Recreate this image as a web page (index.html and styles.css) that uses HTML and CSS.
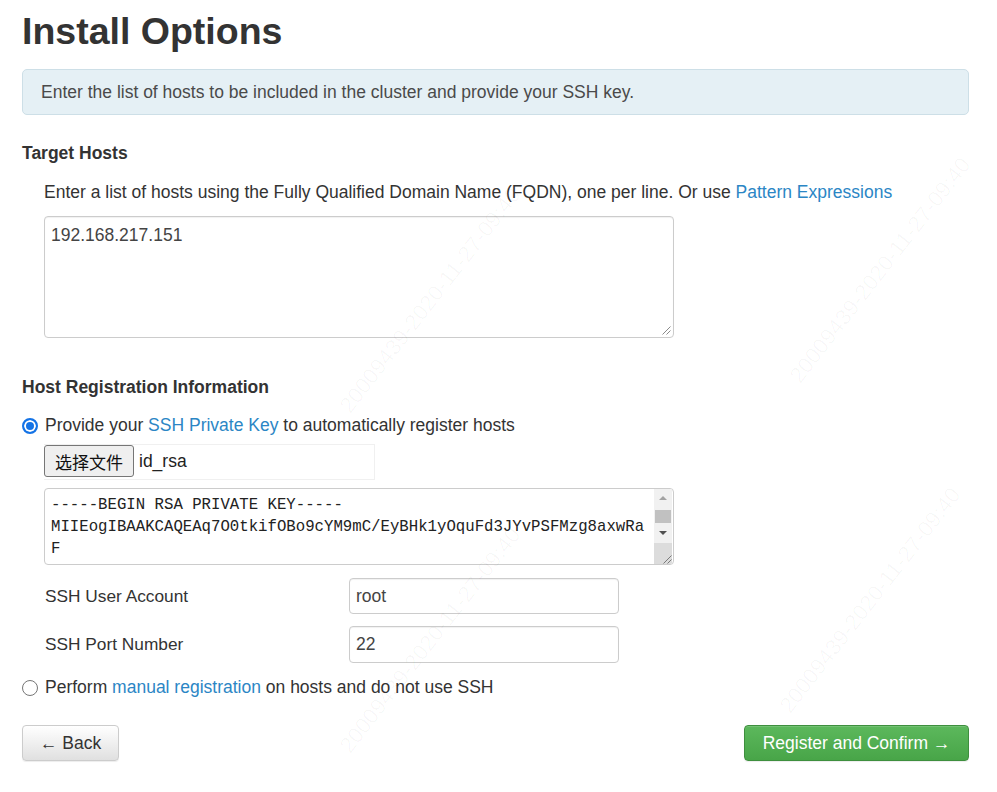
FILE: index.html
```html
<!DOCTYPE html>
<html lang="en">
<head>
<meta charset="utf-8">
<title>Install Options</title>
<link rel="stylesheet" href="styles.css">
</head>
<body>
<div class="page">
  <h1 class="title">Install Options</h1>
  <div class="alert">Enter the list of hosts to be included in the cluster and provide your SSH key.</div>

  <h2 class="section-title first">Target Hosts</h2>
  <div class="indent">
    <p class="help">Enter a list of hosts using the Fully Qualified Domain Name (FQDN), one per line. Or use <a class="link">Pattern Expressions</a></p>
    <div class="textbox hosts-box">
      <span class="textbox-value">192.168.217.151</span>
      <svg class="grip" width="10" height="10" viewBox="0 0 10 10"><path d="M9.5 1.5 L1.5 9.5 M9.5 5.5 L5.5 9.5" stroke="#8a8a8a" stroke-width="1" fill="none"/></svg>
    </div>
  </div>

  <h2 class="section-title second">Host Registration Information</h2>
  <label class="radio-line first-radio"><span class="radio checked"></span>Provide your <a class="link">SSH Private Key</a> to automatically register hosts</label>
  <div class="indent">
    <div class="file-input">
      <span class="file-btn">选择文件</span>
      <span class="file-name">id_rsa</span>
    </div>
    <div class="keybox">
      <div class="key-text">-----BEGIN RSA PRIVATE KEY-----
MIIEogIBAAKCAQEAq7O0tkifOBo9cYM9mC/EyBHk1yOquFd3JYvPSFMzg8axwRa
F</div>
      <div class="scrollbar">
        <div class="sb-btn up"><span class="tri-up"></span></div>
        <div class="sb-thumb"></div>
        <div class="sb-btn down"><span class="tri-down"></span></div>
        <div class="sb-corner">
          <svg width="10" height="10" viewBox="0 0 10 10"><path d="M9.5 1.5 L1.5 9.5 M9.5 5.5 L5.5 9.5" stroke="#7a7a7a" stroke-width="1" fill="none"/></svg>
        </div>
      </div>
    </div>
    <div class="form-row first-row">
      <span class="form-label">SSH User Account</span>
      <div class="input">root</div>
    </div>
    <div class="form-row">
      <span class="form-label">SSH Port Number</span>
      <div class="input tall">22</div>
    </div>
  </div>
  <label class="radio-line manual"><span class="radio"></span>Perform <a class="link">manual registration</a> on hosts and do not use SSH</label>

  <div class="actions">
    <button class="btn btn-default">&larr; Back</button>
    <button class="btn btn-success">Register and Confirm &rarr;</button>
  </div>
</div>

<div class="watermarks" aria-hidden="true">
  <span class="wm wm1">20009439-2020-11-27-09:40</span>
  <span class="wm wm2">20009439-2020-11-27-09:40</span>
  <span class="wm wm3">20009439-2020-11-27-09:40</span>
  <span class="wm wm4">20009439-2020-11-27-09:40</span>
</div>
</body>
</html>
```

FILE: styles.css
```css
html, body {
  margin: 0;
  padding: 0;
  background: #ffffff;
}

body {
  font-family: "Liberation Sans", Arial, sans-serif;
  font-size: 17.5px;
  line-height: 25px;
  color: #333333;
}

.page {
  padding: 0 28px 40px 22px;
}

.title {
  margin: 10px 0 0;
  font-size: 37.5px;
  line-height: 42px;
  font-weight: bold;
  color: #333333;
}

.alert {
  margin-top: 17px;
  padding: 10px 18px 9px;
  background: #e5f0f5;
  border: 1px solid #cddfe7;
  border-radius: 5px;
  color: #4a4a4a;
}

.section-title {
  margin: 0;
  font-size: 17.5px;
  line-height: 25px;
  font-weight: bold;
  color: #333333;
}
.section-title.first { margin-top: 26px; }
.section-title.second { margin-top: 37px; }

.indent {
  padding-left: 22px;
}

.help {
  margin: 14px 0 0;
}

.link {
  color: #2b86c5;
  text-decoration: none;
}

.textbox {
  box-sizing: border-box;
  border: 1px solid #cccccc;
  border-radius: 4px;
  background: #ffffff;
  box-shadow: inset 0 1px 1px rgba(0,0,0,0.06);
}

.hosts-box {
  margin-top: 11px;
  width: 630px;
  height: 122px;
  padding: 6px 2px 2px 6px;
  display: flex;
  flex-direction: column;
}

.textbox-value {
  color: #444444;
}

.grip {
  margin-top: auto;
  align-self: flex-end;
  display: block;
}

.radio-line {
  display: block;
  white-space: nowrap;
}
.first-radio { margin-top: 13px; }
.manual { margin-top: 12px; }

.radio {
  display: inline-block;
  vertical-align: -3px;
  box-sizing: border-box;
  width: 16px;
  height: 16px;
  border-radius: 50%;
  border: 1px solid #767676;
  background: #ffffff;
  margin-right: 7px;
}
.radio.checked {
  border: 2px solid #1473e6;
  background: #1473e6;
  box-shadow: inset 0 0 0 2px #ffffff;
}

.file-input {
  margin-top: 6px;
  box-sizing: border-box;
  width: 331px;
  height: 36px;
  border: 1px solid #f0f0f0;
  border-left: none;
  display: flex;
  align-items: flex-start;
}

.file-btn {
  box-sizing: border-box;
  height: 32px;
  padding: 0 10px;
  display: flex;
  align-items: center;
  font-family: "Noto Sans CJK SC", "Liberation Sans", sans-serif;
  font-size: 17px;
  color: #111111;
  background: #efefef;
  border: 1px solid #767676;
  border-radius: 3px;
}

.file-name {
  margin-left: 5px;
  line-height: 32px;
  color: #222222;
}

.keybox {
  margin-top: 8px;
  box-sizing: border-box;
  width: 630px;
  height: 77px;
  border: 1px solid #cccccc;
  border-radius: 4px;
  display: flex;
  overflow: hidden;
  background: #ffffff;
}

.key-text {
  flex: 1;
  padding: 5px 6px 0;
  font-family: "Liberation Mono", "Courier New", monospace;
  font-size: 15.7px;
  line-height: 22px;
  white-space: pre;
  overflow: hidden;
  color: #222222;
}

.scrollbar {
  width: 18px;
  flex: none;
  background: #f1f1f1;
  display: flex;
  flex-direction: column;
  margin-right: 1px;
}

.sb-btn {
  display: flex;
  align-items: center;
  justify-content: center;
}
.sb-btn.up { height: 18px; }
.sb-btn.down { height: 20px; }

.tri-up {
  width: 0;
  height: 0;
  border-left: 4px solid transparent;
  border-right: 4px solid transparent;
  border-bottom: 4px solid #a3a3a3;
}
.tri-down {
  width: 0;
  height: 0;
  border-left: 4px solid transparent;
  border-right: 4px solid transparent;
  border-top: 4px solid #505050;
}

.sb-thumb {
  margin: 3px 1px 0;
  height: 13px;
  background: #c1c1c1;
}

.sb-corner {
  height: 21px;
  background: #dcdcdc;
  display: flex;
  align-items: flex-end;
  justify-content: flex-end;
}
.sb-corner svg {
  display: block;
}

.form-row {
  display: grid;
  grid-template-columns: 305px 270px;
  align-items: center;
  margin-top: 12px;
}
.form-row.first-row { margin-top: 13px; }

.form-label {
  padding-left: 1px;
  font-size: 17.3px;
  color: #333333;
}

.input {
  box-sizing: border-box;
  height: 36px;
  padding: 0 6px;
  border: 1px solid #cccccc;
  border-radius: 4px;
  line-height: 34px;
  color: #444444;
  box-shadow: inset 0 1px 1px rgba(0,0,0,0.06);
}
.input.tall { height: 37px; line-height: 35px; }

.actions {
  margin-top: 25px;
  display: flex;
  justify-content: space-between;
}

.btn {
  box-sizing: border-box;
  height: 36px;
  font-family: "Liberation Sans", Arial, sans-serif;
  font-size: 17.5px;
  line-height: 25px;
  border-radius: 4px;
  padding: 0;
  cursor: pointer;
}

.btn-default {
  width: 97px;
  color: #333333;
  background: linear-gradient(to bottom, #ffffff 0%, #e0e0e0 100%);
  border: 1px solid #cccccc;
  box-shadow: inset 0 1px 0 rgba(255,255,255,0.15), 0 1px 1px rgba(0,0,0,0.075);
}

.btn-success {
  width: 225px;
  color: #ffffff;
  background: linear-gradient(to bottom, #5cb85c 0%, #48a548 100%);
  border: 1px solid #3e8f3e;
  box-shadow: inset 0 1px 0 rgba(255,255,255,0.15), 0 1px 1px rgba(0,0,0,0.075);
}

.watermarks {
  position: absolute;
  inset: 0;
  overflow: hidden;
  pointer-events: none;
}

.wm {
  position: absolute;
  font-family: "Liberation Sans", sans-serif;
  font-size: 22px;
  color: rgba(0, 0, 0, 0.03);
  white-space: nowrap;
  transform: translate(-50%, -50%) rotate(-52deg);
}
.wm1 { left: 430px; top: 300px; }
.wm2 { left: 880px; top: 270px; }
.wm3 { left: 870px; top: 600px; }
.wm4 { left: 430px; top: 640px; }
```
